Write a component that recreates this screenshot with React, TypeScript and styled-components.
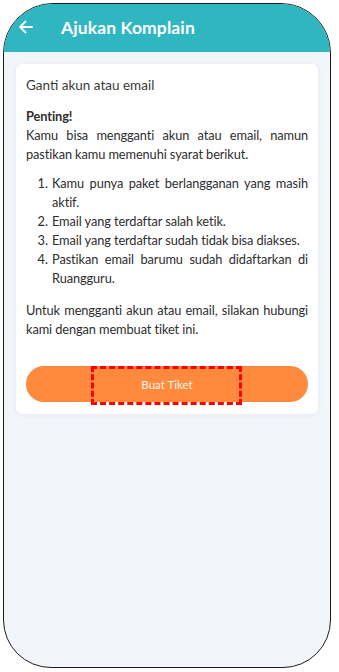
import React from "react";
import styled, { createGlobalStyle } from "styled-components";

const Global = createGlobalStyle`
  html, body { margin: 0; padding: 0; background: #ffffff; }
  body { font-family: Lato, "Noto Sans", sans-serif; }
  * { box-sizing: border-box; }
`;

const Page = styled.div`
  width: 339px;
  height: 672px;
  padding: 3px 0 0 3px;
  background: #ffffff;
`;

const Phone = styled.div`
  width: 328px;
  height: 665px;
  border: 1.5px solid #1c1c1c;
  border-radius: 50px 50px 48px 48px;
  overflow: hidden;
  background: #f2f5fa;
  display: flex;
  flex-direction: column;
`;

const Header = styled.header`
  height: 48px;
  flex: none;
  background: #2fb6c0;
  display: flex;
  align-items: center;
  padding: 0 0 2px 14px;
  color: #ffffff;
  gap: 27px;
`;

const Back = styled.span`
  display: flex;
  width: 16px;
  height: 16px;
`;

const Title = styled.h1`
  margin: 0;
  font-family: Lato, "Noto Sans", sans-serif;
  font-weight: 700;
  font-size: 17.5px;
  letter-spacing: 0.1px;
`;

const Content = styled.main`
  padding: 12px 12px 0 12px;
`;

const Card = styled.section`
  background: #ffffff;
  border-radius: 6px;
  box-shadow: 0 1px 4px rgba(40, 60, 100, 0.08);
  padding: 11px 10px 12px 10px;
  color: #2e2e2e;
  font-size: 12.8px;
  letter-spacing: -0.1px;
  line-height: 19px;
`;

const CardTitle = styled.h2`
  margin: 0 0 12px 0;
  font-size: 13.5px;
  font-weight: 400;
  letter-spacing: 0;
  line-height: 20px;
  color: #3a3a3a;
`;

const Strong = styled.div`
  font-weight: 700;
`;

const Para = styled.p<{ $mt?: number }>`
  margin: ${(p) => p.$mt ?? 0}px 0 0 0;
  text-align: justify;
`;

const List = styled.ol`
  margin: 10px 0 0 0;
  padding: 0 0 0 25px;
`;

const Item = styled.li`
  text-align: justify;
  padding-left: 1px;
`;

const ButtonWrap = styled.div`
  position: relative;
  margin-top: 27px;
`;

const Button = styled.button`
  width: 100%;
  height: 36px;
  border: none;
  border-radius: 18px;
  background: #ff8a3d;
  color: #fff3ea;
  font-family: Lato, "Noto Sans", sans-serif;
  font-size: 11.5px;
  padding: 0;
`;

const Highlight = styled.div`
  position: absolute;
  left: 65px;
  top: 0;
  width: 151px;
  height: 39px;
  border: 3px dashed #ff0000;
  pointer-events: none;
`;

export default function App() {
  return (
    <>
      <Global />
      <Page>
        <Phone>
          <Header>
            <Back>
              <svg width="16" height="16" viewBox="0 0 16 16" fill="none" stroke="#ffffff" strokeWidth="1.8" strokeLinecap="round" strokeLinejoin="round">
                <path d="M14 8H2M7.5 2.5L2 8l5.5 5.5" />
              </svg>
            </Back>
            <Title>Ajukan Komplain</Title>
          </Header>
          <Content>
            <Card>
              <CardTitle>Ganti akun atau email</CardTitle>
              <Strong>Penting!</Strong>
              <Para>Kamu bisa mengganti akun atau email, namun pastikan kamu memenuhi syarat berikut.</Para>
              <List>
                <Item>Kamu punya paket berlangganan yang masih aktif.</Item>
                <Item>Email yang terdaftar salah ketik.</Item>
                <Item>Email yang terdaftar sudah tidak bisa diakses.</Item>
                <Item>Pastikan email barumu sudah didaftarkan di Ruangguru.</Item>
              </List>
              <Para $mt={13}>Untuk mengganti akun atau email, silakan hubungi kami dengan membuat tiket ini.</Para>
              <ButtonWrap>
                <Button>Buat Tiket</Button>
                <Highlight />
              </ButtonWrap>
            </Card>
          </Content>
        </Phone>
      </Page>
    </>
  );
}
